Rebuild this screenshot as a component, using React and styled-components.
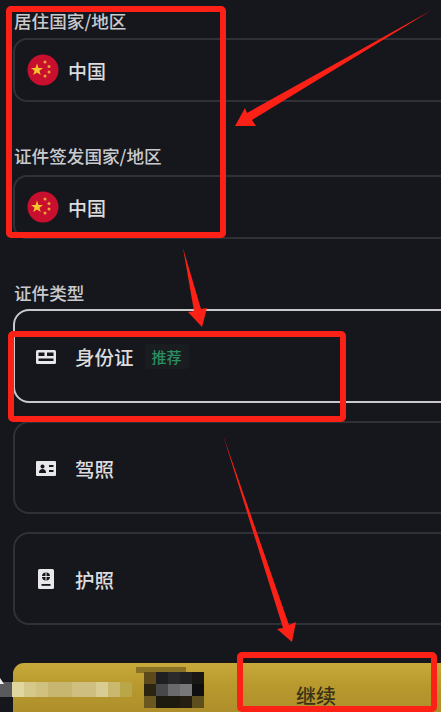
import styled, { createGlobalStyle } from "styled-components";

const GlobalStyle = createGlobalStyle`
  html, body {
    margin: 0;
    background: #16171d;
  }
`;

const Page = styled.div`
  position: relative;
  width: 441px;
  height: 712px;
  overflow: hidden;
  box-sizing: border-box;
  padding: 13px 0 0 13px;
  background: #16171d;
  font-family: "Noto Sans CJK SC", "Noto Sans", sans-serif;
  font-weight: 500;
  color: #e6e6e8;
`;

const Section = styled.section`
  display: flex;
  flex-direction: column;
  width: 470px;
  margin-bottom: ${(p) => p.$gap || 0}px;
`;

const Label = styled.div`
  height: 16px;
  margin-bottom: ${(p) => p.$after || 9}px;
  padding-left: 1px;
  font-size: 17.6px;
  line-height: 16px;
  color: #c9cacd;
`;

const Field = styled.div`
  display: flex;
  align-items: center;
  gap: 9px;
  box-sizing: border-box;
  height: 64px;
  padding: 0 12px;
  border: 2px solid #303136;
  border-radius: 14px;
`;

const FieldText = styled.span`
  font-size: 19px;
  color: #dcdcde;
`;

const TypeList = styled.div`
  display: flex;
  flex-direction: column;
  gap: 18px;
`;

const TypeCard = styled.div`
  display: flex;
  align-items: center;
  box-sizing: border-box;
  height: ${(p) => (p.$selected ? 94 : 93)}px;
  padding: 1px 0 0 21px;
  border: 2px solid ${(p) => (p.$selected ? "#c8c8ca" : "#303136")};
  border-radius: 16px;
`;

const IconSlot = styled.div`
  display: flex;
  justify-content: center;
  width: 20px;
  margin-right: 19px;
  color: #e8e8ea;
`;

const TypeName = styled.span`
  font-size: 19.5px;
  color: #dcdcde;
`;

const Badge = styled.span`
  margin-left: 11px;
  padding: 2px 7px;
  border-radius: 3px;
  background: #1a1d20;
  font-size: 15px;
  line-height: 21px;
  color: #2a8f63;
`;

const ContinueButton = styled.button`
  display: flex;
  justify-content: center;
  box-sizing: border-box;
  width: 470px;
  height: 60px;
  margin-top: 38px;
  padding: 21px 0 0 136px;
  border: 0;
  border-radius: 11px 11px 0 0;
  background: linear-gradient(180deg, #c8a93a 0%, #b99a2e 35%, #a98a2a 100%);
  font-family: inherit;
  font-weight: 500;
  font-size: 20px;
  line-height: 24px;
  color: #3a3214;
`;

const Mosaic = styled.div`
  position: absolute;
  left: ${(p) => p.$x}px;
  top: ${(p) => p.$y}px;
  display: grid;
  grid-template-columns: repeat(${(p) => p.$cols}, 12px);
  grid-auto-rows: ${(p) => p.$rowH}px;
`;

const Tile = styled.i`
  display: block;
  background: ${(p) => p.$c};
`;

const Smudge = styled.div`
  position: absolute;
  left: 136px;
  top: 667px;
  width: 50px;
  height: 6px;
  background: #8a7224;
`;

const Annotations = styled.svg`
  position: absolute;
  inset: 0;
  width: 441px;
  height: 712px;
  pointer-events: none;
`;

const Flag = () => (
  <svg width="32" height="32" viewBox="0 0 32 32">
    <circle cx="16" cy="16" r="15.5" fill="#c8102e" />
    <polygon
      fill="#f7c52e"
      points="10,9.5 11.5,14 16,14 12.4,16.8 13.8,21 10,18.500 6.2,21 7.6,16.8 4,14 8.5,14"
    />
    <circle cx="18" cy="8" r="1.5" fill="#e9a23a" />
    <circle cx="22" cy="12.5" r="1.5" fill="#e9a23a" />
    <circle cx="22" cy="18" r="1.5" fill="#e9a23a" />
    <circle cx="18" cy="22" r="1.5" fill="#e9a23a" />
  </svg>
);

const IdIcon = () => (
  <svg width="20" height="14" viewBox="0 0 20 14">
    <rect width="20" height="14" rx="1.5" fill="currentColor" />
    <rect x="2.5" y="2.5" width="6" height="3.5" fill="#16171d" />
    <rect x="11" y="2.5" width="6.5" height="3.5" fill="#16171d" />
    <rect x="2.5" y="8.5" width="15" height="2.5" fill="#16171d" />
  </svg>
);

const LicenseIcon = () => (
  <svg width="20" height="15" viewBox="0 0 20 15">
    <rect width="20" height="15" rx="1" fill="currentColor" />
    <circle cx="6.5" cy="5.5" r="2" fill="#16171d" />
    <path d="M3 12c0-3 1.5-4 3.5-4s3.500 1 3.500 4z" fill="#16171d" />
    <rect x="13" y="4" width="4.500" height="2" fill="#16171d" />
    <rect x="13" y="9" width="4.500" height="2" fill="#16171d" />
  </svg>
);

const PassportIcon = () => (
  <svg width="16" height="20" viewBox="0 0 16 20">
    <rect width="16" height="20" rx="1.500" fill="currentColor" />
    <circle cx="8" cy="7.500" r="4" fill="#16171d" />
    <path d="M8 3.500v8M4 7.500h8" stroke="currentColor" strokeWidth="1" />
    <rect x="3.500" y="15" width="9" height="1.800" fill="#16171d" />
  </svg>
);

const lightTiles = [
  "#5a5a5e", "#e0d6a0", "#d4c88a", "#d0c180", "#c7b670", "#c7b670",
  "#cebf80", "#cebf80", "#d8cc92", "#c9b96e", "#b9a648",
];
const darkTiles = [
  "#5c4a1a", "#1f1f22", "#2a2a2c", "#222224", "#1a1814",
  "#2a2410", "#48484a", "#6a6a6c", "#78787a", "#0f0f10",
  "#6b5820", "#1d1a0f", "#1d1a0f", "#241f12", "#5d4e1e",
];

export default function App() {
  return (
    <Page>
      <GlobalStyle />
      <Section $gap={46}>
        <Label>居住国家/地区</Label>
        <Field>
          <Flag />
          <FieldText>中国</FieldText>
        </Field>
      </Section>
      <Section $gap={46}>
        <Label $after={11}>证件签发国家/地区</Label>
        <Field>
          <Flag />
          <FieldText>中国</FieldText>
        </Field>
      </Section>
      <Section>
        <Label $after={8}>证件类型</Label>
        <TypeList>
          <TypeCard $selected>
            <IconSlot><IdIcon /></IconSlot>
            <TypeName>身份证</TypeName>
            <Badge>推荐</Badge>
          </TypeCard>
          <TypeCard>
            <IconSlot><LicenseIcon /></IconSlot>
            <TypeName>驾照</TypeName>
          </TypeCard>
          <TypeCard>
            <IconSlot><PassportIcon /></IconSlot>
            <TypeName>护照</TypeName>
          </TypeCard>
        </TypeList>
      </Section>
      <ContinueButton>继续</ContinueButton>

      <Mosaic $x={0} $y={682} $cols={11} $rowH={15}>
        {lightTiles.map((c, i) => (
          <Tile key={i} $c={c} />
        ))}
      </Mosaic>
      <Smudge />
      <Mosaic $x={144} $y={672} $cols={5} $rowH={12}>
        {darkTiles.map((c, i) => (
          <Tile key={i} $c={c} />
        ))}
      </Mosaic>

      <Annotations viewBox="0 0 441 712">
        <polygon fill="#f2f2f2" points="0,678 4,684 0,684" />
        <g fill="none" stroke="#fb2116" strokeWidth="6" strokeLinejoin="round">
          <rect x="9" y="9" width="214" height="226" rx="2" />
          <rect x="11" y="334" width="332" height="85" rx="2" />
          <rect x="240" y="655" width="194" height="54" rx="2" />
        </g>
        <g fill="#fb2116">
          <polygon points="432,10 247,113 245,108 235,126 256,126 252,120" />
          <polygon points="183,248 194,311 188,312 202,327 207,308 201,309" />
          <polygon points="223,435 289,625 296,622 292,642 277,629 283,628" />
        </g>
      </Annotations>
    </Page>
  );
}
